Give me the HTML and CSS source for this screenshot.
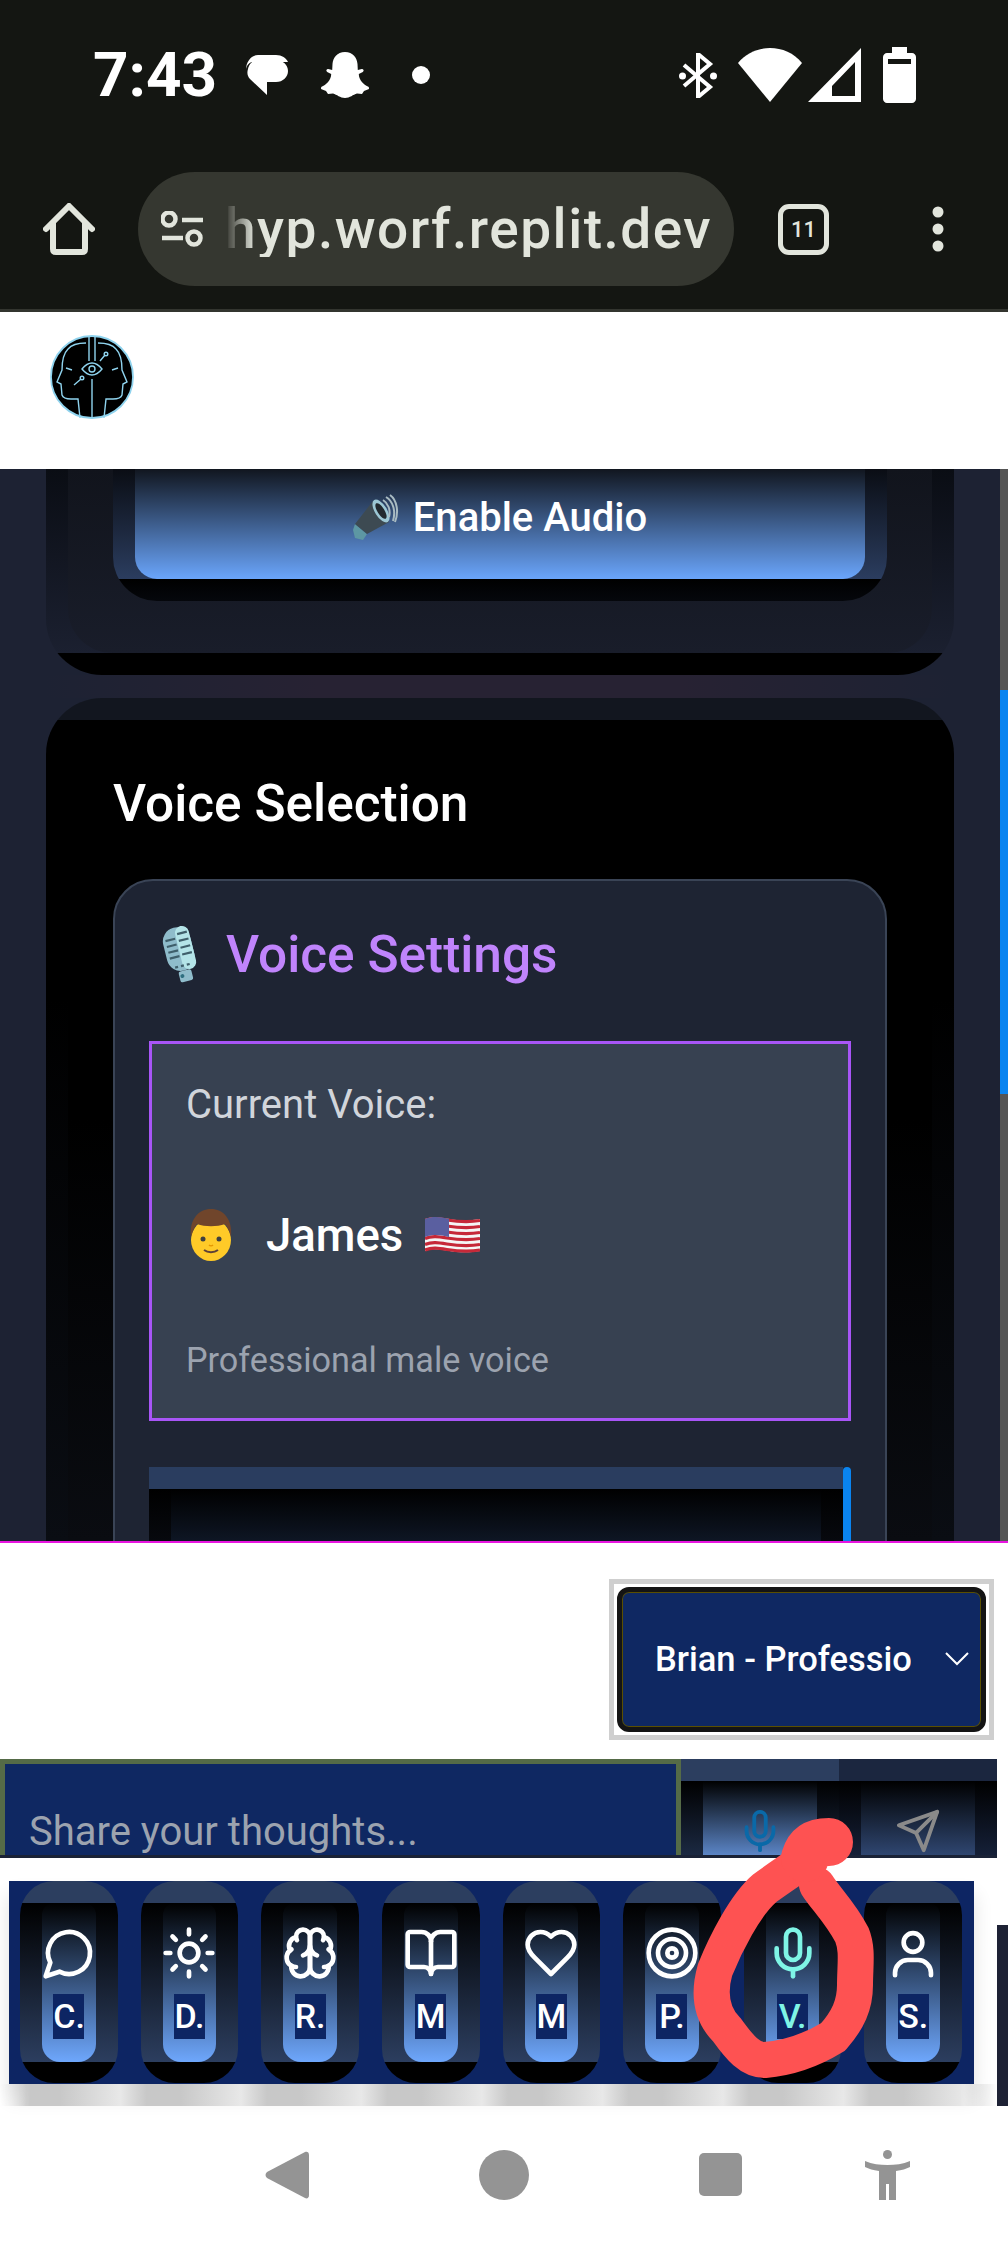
FILE: index.html
```html
<!DOCTYPE html>
<html lang="en">
<head>
<meta charset="utf-8">
<title>Voice Selection</title>
<link rel="stylesheet" href="styles.css">
</head>
<body>
<div class="phone">
  <header class="chrome">
    <div class="status">
      <span class="time">7:43</span>
      <svg class="st-bubble" viewBox="0 0 42 40"><path class="fw" d="M12 0h18c6 0 10 3 12 7H6C2 8 0 12 0 15 0 7 5 0 12 0z"/><path class="fw" d="M12 5h18c7 0 12 5 12 11s-5 11-12 11h-9v13L4 24C1 21 1 17 2 14 3 9 7 5 12 5z"/></svg>
      <svg class="st-snap" viewBox="0 0 48 46"><path class="fw" d="M24 0c8 0 12 6 12.500 12l.3 6 4-1c2 0 2.500 2 1 3l-4 2c0 6 5 11 10 13l.2 2-5 2-2 3-5-.5c-4 1-7 4.500-12 4.500s-8-3.500-12-4.500l-5 .5-2-3-5-2 .2-2c5-2 10-7 10-13l-4-2c-1.500-1-1-3 1-3l4 1 .3-6C12 6 16 0 24 0z"/></svg>
      <span class="st-dot"></span>
      <div class="status-right">
        <svg class="st-bt" viewBox="0 0 38 45"><path class="ln" d="M5 12l26 22-12 10V1l12 10L5 33"/><circle class="fw" cx="3.500" cy="23" r="3.500"/><circle class="fw" cx="34.500" cy="23" r="3.500"/></svg>
        <svg class="st-wifi" viewBox="0 0 64 54"><path class="fw" d="M0 15C8 5 20 0 32 0s24 5 32 15L32 54z"/></svg>
        <svg class="st-sig" viewBox="0 0 53 54"><path class="fw" fill-rule="evenodd" d="M53 0v54H0zM47 14L24 38v10h23z"/></svg>
        <svg class="st-bat" viewBox="0 0 33 56"><path class="fw" fill-rule="evenodd" d="M9 0h15v6h5c2 0 4 2 4 4v42c0 2-2 4-4 4H4c-2 0-4-2-4-4V10c0-2 2-4 4-4h5zM5 12v5h23v-5z"/></svg>
      </div>
    </div>
    <div class="toolbar">
      <svg class="tb-home" viewBox="0 0 52 52"><path d="M3 26L26 3l23 23M10 20v26c0 2 1 3 3 3h26c2 0 3-1 3-3V20"/></svg>
      <div class="url">
        <svg class="tb-tune" viewBox="0 0 42 36"><circle cx="8" cy="8" r="6.500"/><path d="M21 9h21M1 27h21"/><circle cx="33" cy="27" r="6.500"/></svg>
        <span class="url-text">hyp.worf.replit.dev</span>
      </div>
      <div class="tb-tab">11</div>
      <svg class="tb-dots" viewBox="0 0 12 46"><circle cx="6" cy="6" r="5.500"/><circle cx="6" cy="23" r="5.500"/><circle cx="6" cy="40" r="5.500"/></svg>
    </div>
  </header>

  <div class="app-head">
    <svg class="logo" viewBox="0 0 84 84">
      <circle cx="42" cy="42" r="41" fill="#000" stroke="#8fd3ee" stroke-width="1.800"/>
      <g fill="none" stroke="#8fd3ee" stroke-width="1.400">
        <path d="M39 1v25M45 1v25M42 44v39"/>
        <path d="M36 8C28 8 22 9 18 14 13 19 12 27 12 35L7 47l4 2 1 11c1 3 5 4 9 4h7l2 19"/>
        <path d="M48 8c8 0 14 1 18 6 5 5 6 13 6 21l5 12-4 2-1 11c-1 3-5 4-9 4h-7l-2 19"/>
        <path d="M32 34c4-5 7-6 10-6s6 1 10 6c-4 5-7 6-10 6s-6-1-10-6z"/>
        <circle cx="42" cy="34" r="3"/>
        <path d="M24 50l7-6M50 26l5-6M16 33l6 2M68 33l-6 2"/>
        <circle cx="32" cy="43" r="1.800"/><circle cx="56" cy="19" r="1.800"/>
      </g>
    </svg>
  </div>

  <main class="scroller">
    <div class="content">
      <section class="card-top">
        <div class="card-top-inner">
          <div class="enable-wrap">
            <button class="enable">
              <svg class="emoji-speaker" viewBox="0 0 46 46">
                <path d="M2 30l12 10-4 6-8-2-2-8z" fill="#5d97a3"/>
                <path d="M2 30L20 7l16 21-22 12z" fill="#3d4a52"/>
                <ellipse cx="28" cy="17" rx="6" ry="13" fill="#9cc7d4" transform="rotate(-32 28 17)"/>
                <ellipse cx="28" cy="17" rx="3.500" ry="9" fill="#22292e" transform="rotate(-32 28 17)"/>
                <g fill="none" stroke="#a9bbc2" stroke-width="2">
                  <path d="M30 6c5 3 8 10 6 17"/><path d="M33 3c7 4 10 14 7 24"/><path d="M37 1c7 5 9 17 5 27"/>
                </g>
              </svg>
              <span>Enable Audio</span>
            </button>
          </div>
        </div>
      </section>
      <div class="card-gap"></div>
      <section class="card">
        <div class="card-inner">
          <h2 class="section-title">Voice Selection</h2>
          <div class="panel">
            <div class="panel-head">
              <svg class="emoji-mic" viewBox="0 0 40 62">
                <g transform="rotate(-14 20 30)">
                  <rect x="6" y="3" width="28" height="44" rx="14" fill="#8fbccb"/>
                  <rect x="20" y="3" width="14" height="44" rx="7" fill="#b4e4e8"/>
                  <g stroke="#3f5f6b" stroke-width="2.200"><path d="M9 14h10M9 20h10M9 26h10M9 32h10M22 10h10M22 17h10M22 24h10M22 31h10M12 42h3M18 42h3M24 42h3"/></g>
                  <rect x="14" y="47" width="13" height="11" rx="2" fill="#8fbccb"/>
                  <circle cx="17" cy="52" r="2" fill="#2f6f80"/>
                </g>
              </svg>
              <h3 class="panel-title">Voice Settings</h3>
            </div>
            <div class="current">
              <div class="current-label">Current Voice:</div>
              <div class="current-name">
                <svg class="emoji-man" viewBox="0 0 50 52">
                  <ellipse cx="25" cy="31" rx="20" ry="21" fill="#ffca28"/>
                  <path d="M5 28C3 10 13 0 25 0s22 10 20 28c-2-6-3-10-6-13-8 3-20 3-28 0-3 3-4 7-6 13z" fill="#70452b"/>
                  <circle cx="17" cy="30" r="2.500" fill="#404040"/><circle cx="33" cy="30" r="2.500" fill="#404040"/>
                  <path d="M18 41c4 3 10 3 14 0" fill="none" stroke="#5d4037" stroke-width="2"/>
                  <path d="M23 36c1 1 3 1 4 0" fill="none" stroke="#e59600" stroke-width="1.500"/>
                </svg>
                <span class="name-text">James</span>
                <svg class="emoji-flag" viewBox="0 0 55 40">
                  <path d="M0 4c14-6 28 5 55 0v32c-27 5-41-6-55 0z" fill="#f5f5f5"/>
                  <g fill="none" stroke="#c62838" stroke-width="3.100">
                    <path d="M0 5.500c14-6 28 5 55 0"/><path d="M0 11.500c14-6 28 5 55 0"/><path d="M0 17.500c14-6 28 5 55 0"/><path d="M0 23.500c14-6 28 5 55 0"/><path d="M0 29.500c14-6 28 5 55 0"/><path d="M0 35c14-6 28 5 55 0"/>
                  </g>
                  <path d="M0 4c8-3 16-2 24 0v18c-8-2-16-3-24 0z" fill="#5a5fa0"/>
                </svg>
              </div>
              <div class="current-desc">Professional male voice</div>
            </div>
            <div class="voice-list">
              <div class="voice-list-body">
                <div class="voice-list-inner"></div>
              </div>
              <div class="voice-list-thumb"></div>
            </div>
          </div>
        </div>
      </section>
    </div>
    <div class="page-scrollbar"></div>
  </main>

  <div class="dock">
    <div class="select-row">
      <div class="select-frame">
        <div class="select">
          <span class="select-text">Brian - Professio</span>
          <svg class="select-chevron" viewBox="0 0 24 14"><path d="M1 1l11 11L23 1"/></svg>
        </div>
      </div>
    </div>
    <div class="input-row">
      <div class="input"><span class="placeholder">Share your thoughts...</span></div>
      <div class="act act-mic">
        <div class="act-inner">
          <svg class="icon-46" viewBox="0 0 24 24"><path d="M12 2a3 3 0 0 0-3 3v7a3 3 0 0 0 6 0V5a3 3 0 0 0-3-3Z"/><path d="M19 10v2a7 7 0 0 1-14 0v-2"/><path d="M12 19v3"/></svg>
        </div>
      </div>
      <div class="act act-send">
        <div class="act-inner">
          <svg class="icon-46" viewBox="0 0 24 24"><path d="M22 2 15 22 11 13 2 9Z"/><path d="M22 2 11 13"/></svg>
        </div>
      </div>
    </div>
    <nav class="tabs">
      <div class="pill"><div class="pill-inner">
        <svg class="tab-icon" viewBox="0 0 24 24"><path d="M7.900 20A9 9 0 1 0 4 16.100L2 22Z"/></svg>
        <span class="tab-label">C.</span></div></div>
      <div class="pill"><div class="pill-inner">
        <svg class="tab-icon" viewBox="0 0 24 24"><circle cx="12" cy="12" r="4"/><path d="M12 2v2M12 20v2M4.930 4.930l1.410 1.410M17.660 17.660l1.410 1.410M2 12h2M20 12h2M6.340 17.660l-1.410 1.410M19.070 4.930l-1.410 1.410"/></svg>
        <span class="tab-label">D.</span></div></div>
      <div class="pill"><div class="pill-inner">
        <svg class="tab-icon" viewBox="0 0 24 24"><path d="M12 5a3 3 0 1 0-5.997.125 4 4 0 0 0-2.526 5.770 4 4 0 0 0 .556 6.588A4 4 0 1 0 12 18Z"/><path d="M12 5a3 3 0 1 1 5.997.125 4 4 0 0 1 2.526 5.770 4 4 0 0 1-.556 6.588A4 4 0 1 1 12 18Z"/><path d="M15 13a4.500 4.500 0 0 1-3-4 4.500 4.500 0 0 1-3 4"/><path d="M17.599 6.500a3 3 0 0 0 .399-1.375"/><path d="M6.003 5.125A3 3 0 0 0 6.401 6.500"/><path d="M3.477 10.896a4 4 0 0 1 .585-.396"/><path d="M19.938 10.500a4 4 0 0 1 .585.396"/><path d="M6 18a4 4 0 0 1-1.967-.516"/><path d="M19.967 17.484A4 4 0 0 1 18 18"/></svg>
        <span class="tab-label">R.</span></div></div>
      <div class="pill"><div class="pill-inner">
        <svg class="tab-icon" viewBox="0 0 24 24"><path d="M12 7v14"/><path d="M3 18a1 1 0 0 1-1-1V4a1 1 0 0 1 1-1h5a4 4 0 0 1 4 4 4 4 0 0 1 4-4h5a1 1 0 0 1 1 1v13a1 1 0 0 1-1 1h-6a3 3 0 0 0-3 3 3 3 0 0 0-3-3z"/></svg>
        <span class="tab-label">M</span></div></div>
      <div class="pill"><div class="pill-inner">
        <svg class="tab-icon" viewBox="0 0 24 24"><path d="M19 14c1.490-1.460 3-3.210 3-5.500A5.500 5.500 0 0 0 16.500 3c-1.760 0-3 .5-4.500 2-1.500-1.500-2.740-2-4.500-2A5.500 5.500 0 0 0 2 8.500c0 2.300 1.500 4.050 3 5.500l7 7Z"/></svg>
        <span class="tab-label">M</span></div></div>
      <div class="pill"><div class="pill-inner">
        <svg class="tab-icon" viewBox="0 0 24 24"><circle cx="12" cy="12" r="10"/><circle cx="12" cy="12" r="6"/><circle cx="12" cy="12" r="2"/></svg>
        <span class="tab-label">P.</span></div></div>
      <div class="pill pill-active"><div class="pill-inner">
        <svg class="tab-icon" viewBox="0 0 24 24"><path d="M12 2a3 3 0 0 0-3 3v7a3 3 0 0 0 6 0V5a3 3 0 0 0-3-3Z"/><path d="M19 10v2a7 7 0 0 1-14 0v-2"/><path d="M12 19v3"/></svg>
        <span class="tab-label">V.</span></div></div>
      <div class="pill"><div class="pill-inner">
        <svg class="tab-icon" viewBox="0 0 24 24"><circle cx="12" cy="7.500" r="4"/><path d="M4.300 21.500v-1c0-3 2.500-5.500 5.500-5.500h4.400c3 0 5.500 2.500 5.500 5.500v1"/></svg>
        <span class="tab-label">S.</span></div></div>
    </nav>
    <div class="tabs-shadow"></div>
  </div>

  <footer class="sysnav">
    <svg class="sys-back" viewBox="0 0 44 48"><path d="M40 1c2-1 4 0 4 3v40c0 3-2 4-4 3L2 27c-2-2-2-4 0-6z"/></svg>
    <svg class="sys-home" viewBox="0 0 50 50"><circle cx="25" cy="25" r="25"/></svg>
    <svg class="sys-recent" viewBox="0 0 43 43"><rect width="43" height="43" rx="5"/></svg>
    <svg class="sys-a11y" viewBox="0 0 45 50"><ellipse cx="22.500" cy="4.500" rx="4.500" ry="4.500"/><path d="M0 11c7 3 15 4 22.500 4s15.500-1 22.500-4v6c-4 2-8 3-14 4v29h-7V34h-3v16h-7V21C8 20 4 19 0 17z"/></svg>
  </footer>

  <svg class="scribble" viewBox="0 0 1008 2244">
    <path d="M827 1843C807 1860 790 1870 765 1888 745 1905 725 1945 715 1970 708 1995 712 2015 727 2030 740 2048 750 2060 765 2060 790 2058 815 2048 833 2037 848 2020 855 2005 855 1985 855 1965 858 1950 852 1935 840 1912 825 1898 817 1885"/>
    <path class="scribble-head" d="M805 1858C809 1845 817 1842 829 1842"/>
  </svg>
</div>
</body>
</html>
```
FILE: styles.css
```css
* { box-sizing: border-box; }
html, body { margin: 0; padding: 0; }
body { background: #fff; font-family: Roboto, "Liberation Sans", sans-serif; }
.phone { width: 1008px; height: 2244px; position: relative; overflow: hidden; background: #fff; display: flex; flex-direction: column; }

/* browser chrome */
.chrome { height: 312px; flex: none; background: #141612; border-bottom: 3px solid #33352f; }
.status { height: 172px; padding: 0 92px 22px 93px; display: flex; align-items: center; }
.time { font-size: 62px; font-weight: 700; color: #fff; line-height: 1; width: 122px; white-space: nowrap; }
.fw { fill: #fff; }
.ln { fill: none; stroke: #fff; stroke-width: 4; }
.st-bubble { width: 42px; height: 40px; margin-left: 31px; }
.st-snap { width: 48px; height: 46px; margin-left: 33px; }
.st-dot { width: 18px; height: 18px; border-radius: 50%; background: #fff; margin-left: 43px; }
.status-right { margin-left: auto; display: flex; align-items: center; }
.st-bt { width: 38px; height: 45px; margin-right: 21px; }
.st-wifi { width: 64px; height: 54px; margin-right: 6px; }
.st-sig { width: 53px; height: 54px; margin-right: 22px; }
.st-bat { width: 33px; height: 56px; }
.toolbar { height: 114px; padding-left: 43px; display: flex; align-items: center; }
.tb-home { width: 52px; height: 52px; fill: none; stroke: #e2e5dc; stroke-width: 6; stroke-linejoin: round; stroke-linecap: round; }
.url { width: 596px; height: 114px; margin-left: 43px; border-radius: 57px; background: #353730; display: flex; align-items: center; padding-left: 23px; overflow: hidden; }
.tb-tune { width: 42px; height: 36px; flex: none; fill: none; stroke: #e2e5dc; stroke-width: 4.500; }
.url-text { margin-left: 22px; font-size: 55px; letter-spacing: 1.500px; font-weight: 500; color: #e2e5dc; line-height: 1; white-space: nowrap; -webkit-mask-image: linear-gradient(90deg, transparent 0, #000 30px); mask-image: linear-gradient(90deg, transparent 0, #000 30px); }
.tb-tab { width: 51px; height: 51px; margin-left: 44px; border: 5px solid #e2e5dc; border-radius: 11px; color: #e2e5dc; font-size: 22px; font-weight: 500; display: flex; align-items: center; justify-content: center; }
.tb-dots { width: 12px; height: 46px; margin-left: 103px; fill: #e2e5dc; }

/* app header */
.app-head { height: 157px; flex: none; padding: 23px 0 0 50px; background: #fff; }
.logo { width: 84px; height: 84px; display: block; }

/* scrolling area */
.scroller { height: 1072px; flex: none; display: flex; overflow: hidden; background: #1d2233; }
.content { width: 1000px; flex: none; padding: 0 46px; }
.page-scrollbar { width: 8px; flex: none; background: linear-gradient(#555 0 221px, #0a84f0 221px 625px, #555 625px); }

.card-top { height: 206px; padding: 0 22px 22px; border-radius: 0 0 56px 56px; background: linear-gradient(#0a0d14, #1b2030 184px, #000 184px); }
.card-top-inner { height: 184px; padding: 0 45px; border-radius: 0 0 44px 44px; background: linear-gradient(#11141c, #191d2a); }
.enable-wrap { height: 132px; padding: 0 22px 22px; border-radius: 0 0 44px 44px; background: linear-gradient(#0a0d14, #2b3d5f 110px, #000 110px, #05070c); }
.enable { width: 100%; height: 110px; border: 0; padding: 0 0 14px; border-radius: 0 0 22px 22px; background: linear-gradient(#11161f, #6aa5fb); color: #fff; font: 500 40px Roboto, sans-serif; display: flex; align-items: center; justify-content: center; gap: 14px; }
.emoji-speaker { width: 46px; height: 46px; }

.card-gap { height: 23px; background: linear-gradient(90deg, #1d2233, #272233 30%, #272233 70%, #1d2233); }

.card { height: 1500px; padding: 22px 22px 0; border-radius: 56px 56px 0 0; background: linear-gradient(#12161f 22px, #000 22px, #000 300px, #0a0d13 843px); }
.card-inner { height: 1400px; padding: 0 45px; background: linear-gradient(#000, #000 400px, #0a0c11 821px); }
.section-title { margin: 0; padding-top: 56px; height: 159px; font-size: 51.400px; line-height: 56px; font-weight: 500; color: #fff; }
.panel { height: 1200px; border: 2px solid #3a4456; border-radius: 40px 40px 0 0; background: #1e2433; padding: 34px 34px 0; }
.panel-head { height: 80px; margin-bottom: 46px; padding-left: 11px; display: flex; align-items: center; gap: 26px; }
.emoji-mic { width: 40px; height: 62px; }
.panel-title { margin: 0; font-size: 51.400px; line-height: 1; font-weight: 500; color: #c084fc; }

.current { height: 380px; border: 3px solid #a855f7; background: #374151; padding: 37px 34px 0; }
.current-label { font-size: 40px; line-height: 48px; color: #d1d5db; }
.current-name { height: 60px; margin-top: 76px; display: flex; align-items: center; }
.emoji-man { width: 50px; height: 52px; }
.name-text { margin-left: 30px; font-size: 45.500px; font-weight: 500; color: #fff; }
.emoji-flag { width: 55px; height: 40px; margin-left: 22px; }
.current-desc { margin-top: 72px; font-size: 34.200px; line-height: 46px; color: #9ca3af; }

.voice-list { height: 300px; margin-top: 46px; display: flex; }
.voice-list-body { flex: 1; padding: 22px 22px 0; background: linear-gradient(#2a3d5f 22px, #000 22px, #0a0d14 96px); }
.voice-list-inner { width: 650px; height: 200px; background: linear-gradient(#000, #0e1624 52px); }
.voice-list-thumb { width: 8px; background: #0a84f0; border-radius: 4px 4px 0 0; }

/* dock */
.dock { flex: none; height: 565px; border-top: 2px solid #e815e0; background: linear-gradient(#1e2235, #1e2235) right bottom / 11px 181px no-repeat, #fff; }
.select-row { height: 216px; padding: 36px 14px 0 0; display: flex; justify-content: flex-end; }
.select-frame { width: 385px; height: 161px; border: 5px solid #cfcfcf; padding: 3px; background: #fff; }
.select { height: 100%; border: 5px solid #141414; border-radius: 12px; background: #0f2862; box-shadow: inset 0 0 0 1px #5a4f00; padding-left: 33px; display: flex; align-items: center; }
.select-text { width: 256px; font-size: 34.500px; font-weight: 500; white-space: nowrap; overflow: hidden; color: #fff; margin-bottom: 2px; }
.select-chevron { width: 24px; height: 14px; margin-left: 34px; fill: none; stroke: #fff; stroke-width: 2; margin-bottom: 2px; }

.input-row { width: 997px; height: 99px; display: flex; border-bottom: 3px solid #1a2236; }
.input { width: 681px; border: 5px solid #556b47; border-bottom: 0; background: #0f2862; padding: 45px 0 0 24px; overflow: hidden; }
.placeholder { display: block; font-size: 40px; line-height: 46px; color: #9ca3af; white-space: nowrap; }
.act { width: 158px; padding: 22px 22px 0; }
.act-inner { height: 74px; display: flex; justify-content: center; padding-top: 27px; overflow: hidden; }
.icon-46 { width: 46px; height: 46px; flex: none; fill: none; stroke-width: 2; stroke-linecap: round; stroke-linejoin: round; }
.act-mic { background: linear-gradient(#2c3e5f 22px, #000 22px, #1b2942); }
.act-mic .act-inner { background: linear-gradient(#000, #5b85c6); }
.act-mic .icon-46 { stroke: #0a69a8; }
.act-send { background: linear-gradient(#1b263f 22px, #000 22px, #152038); }
.act-send .act-inner { background: linear-gradient(#000, #2f4670); }
.act-send .icon-46 { stroke: #8a8a8a; }

.tabs { width: 965px; height: 203px; margin: 23px 0 0 9px; padding: 0 12px 0 11px; background: #0d2563; display: flex; gap: 23px; box-shadow: 0 14px 18px rgba(0,0,0,.12); position: relative; }
.pill { flex: 1 1 0; min-width: 0; height: 202px; padding: 22px; border-radius: 34px; background: linear-gradient(#2c3e5f 22px, #000 22px, #2c3e5f 181px, #000 181px); }
.pill-inner { height: 159px; border-radius: 12px 12px 18px 18px; background: linear-gradient(#000, #6ea7fc); display: flex; flex-direction: column; align-items: center; padding-top: 22px; }
.tab-icon { width: 56px; height: 56px; flex: none; fill: none; stroke: #fff; stroke-width: 2; stroke-linecap: round; stroke-linejoin: round; }
.tab-label { width: 31px; height: 45px; margin-top: 13px; background: #0d2563; color: #fff; font-size: 34px; line-height: 45px; font-weight: 500; text-align: center; overflow: hidden; white-space: nowrap; flex: none; }
.pill-active .tab-icon { stroke: #7ff5e6; }
.pill-active .tab-label { color: #7ff5e6; }
.tabs-shadow { width: 997px; height: 22px; background: repeating-linear-gradient(90deg, #e8e8e8 0, #c8c8c8 26px, #c8c8c8 60px, #e8e8e8 120.500px); -webkit-mask-image: linear-gradient(90deg, transparent, #000 30px, #000 960px, transparent); mask-image: linear-gradient(90deg, transparent, #000 30px, #000 960px, transparent); }

/* system navigation */
.sysnav { flex: 1; background: #fff; padding: 44px 0 0 265px; display: flex; align-items: flex-start; gap: 170px; fill: #949494; }
.sys-back { width: 44px; height: 48px; margin-top: 1px; }
.sys-home { width: 50px; height: 50px; }
.sys-recent { width: 43px; height: 43px; margin-top: 3px; }
.sys-a11y { width: 45px; height: 50px; margin-left: -47px; }

/* hand-drawn marker over the screenshot */
.scribble { position: absolute; left: 0; top: 0; width: 1008px; height: 2244px; fill: none; stroke: #fe5252; stroke-width: 36; stroke-linecap: round; stroke-linejoin: round; pointer-events: none; }
.scribble-head { stroke-width: 48; }
```
